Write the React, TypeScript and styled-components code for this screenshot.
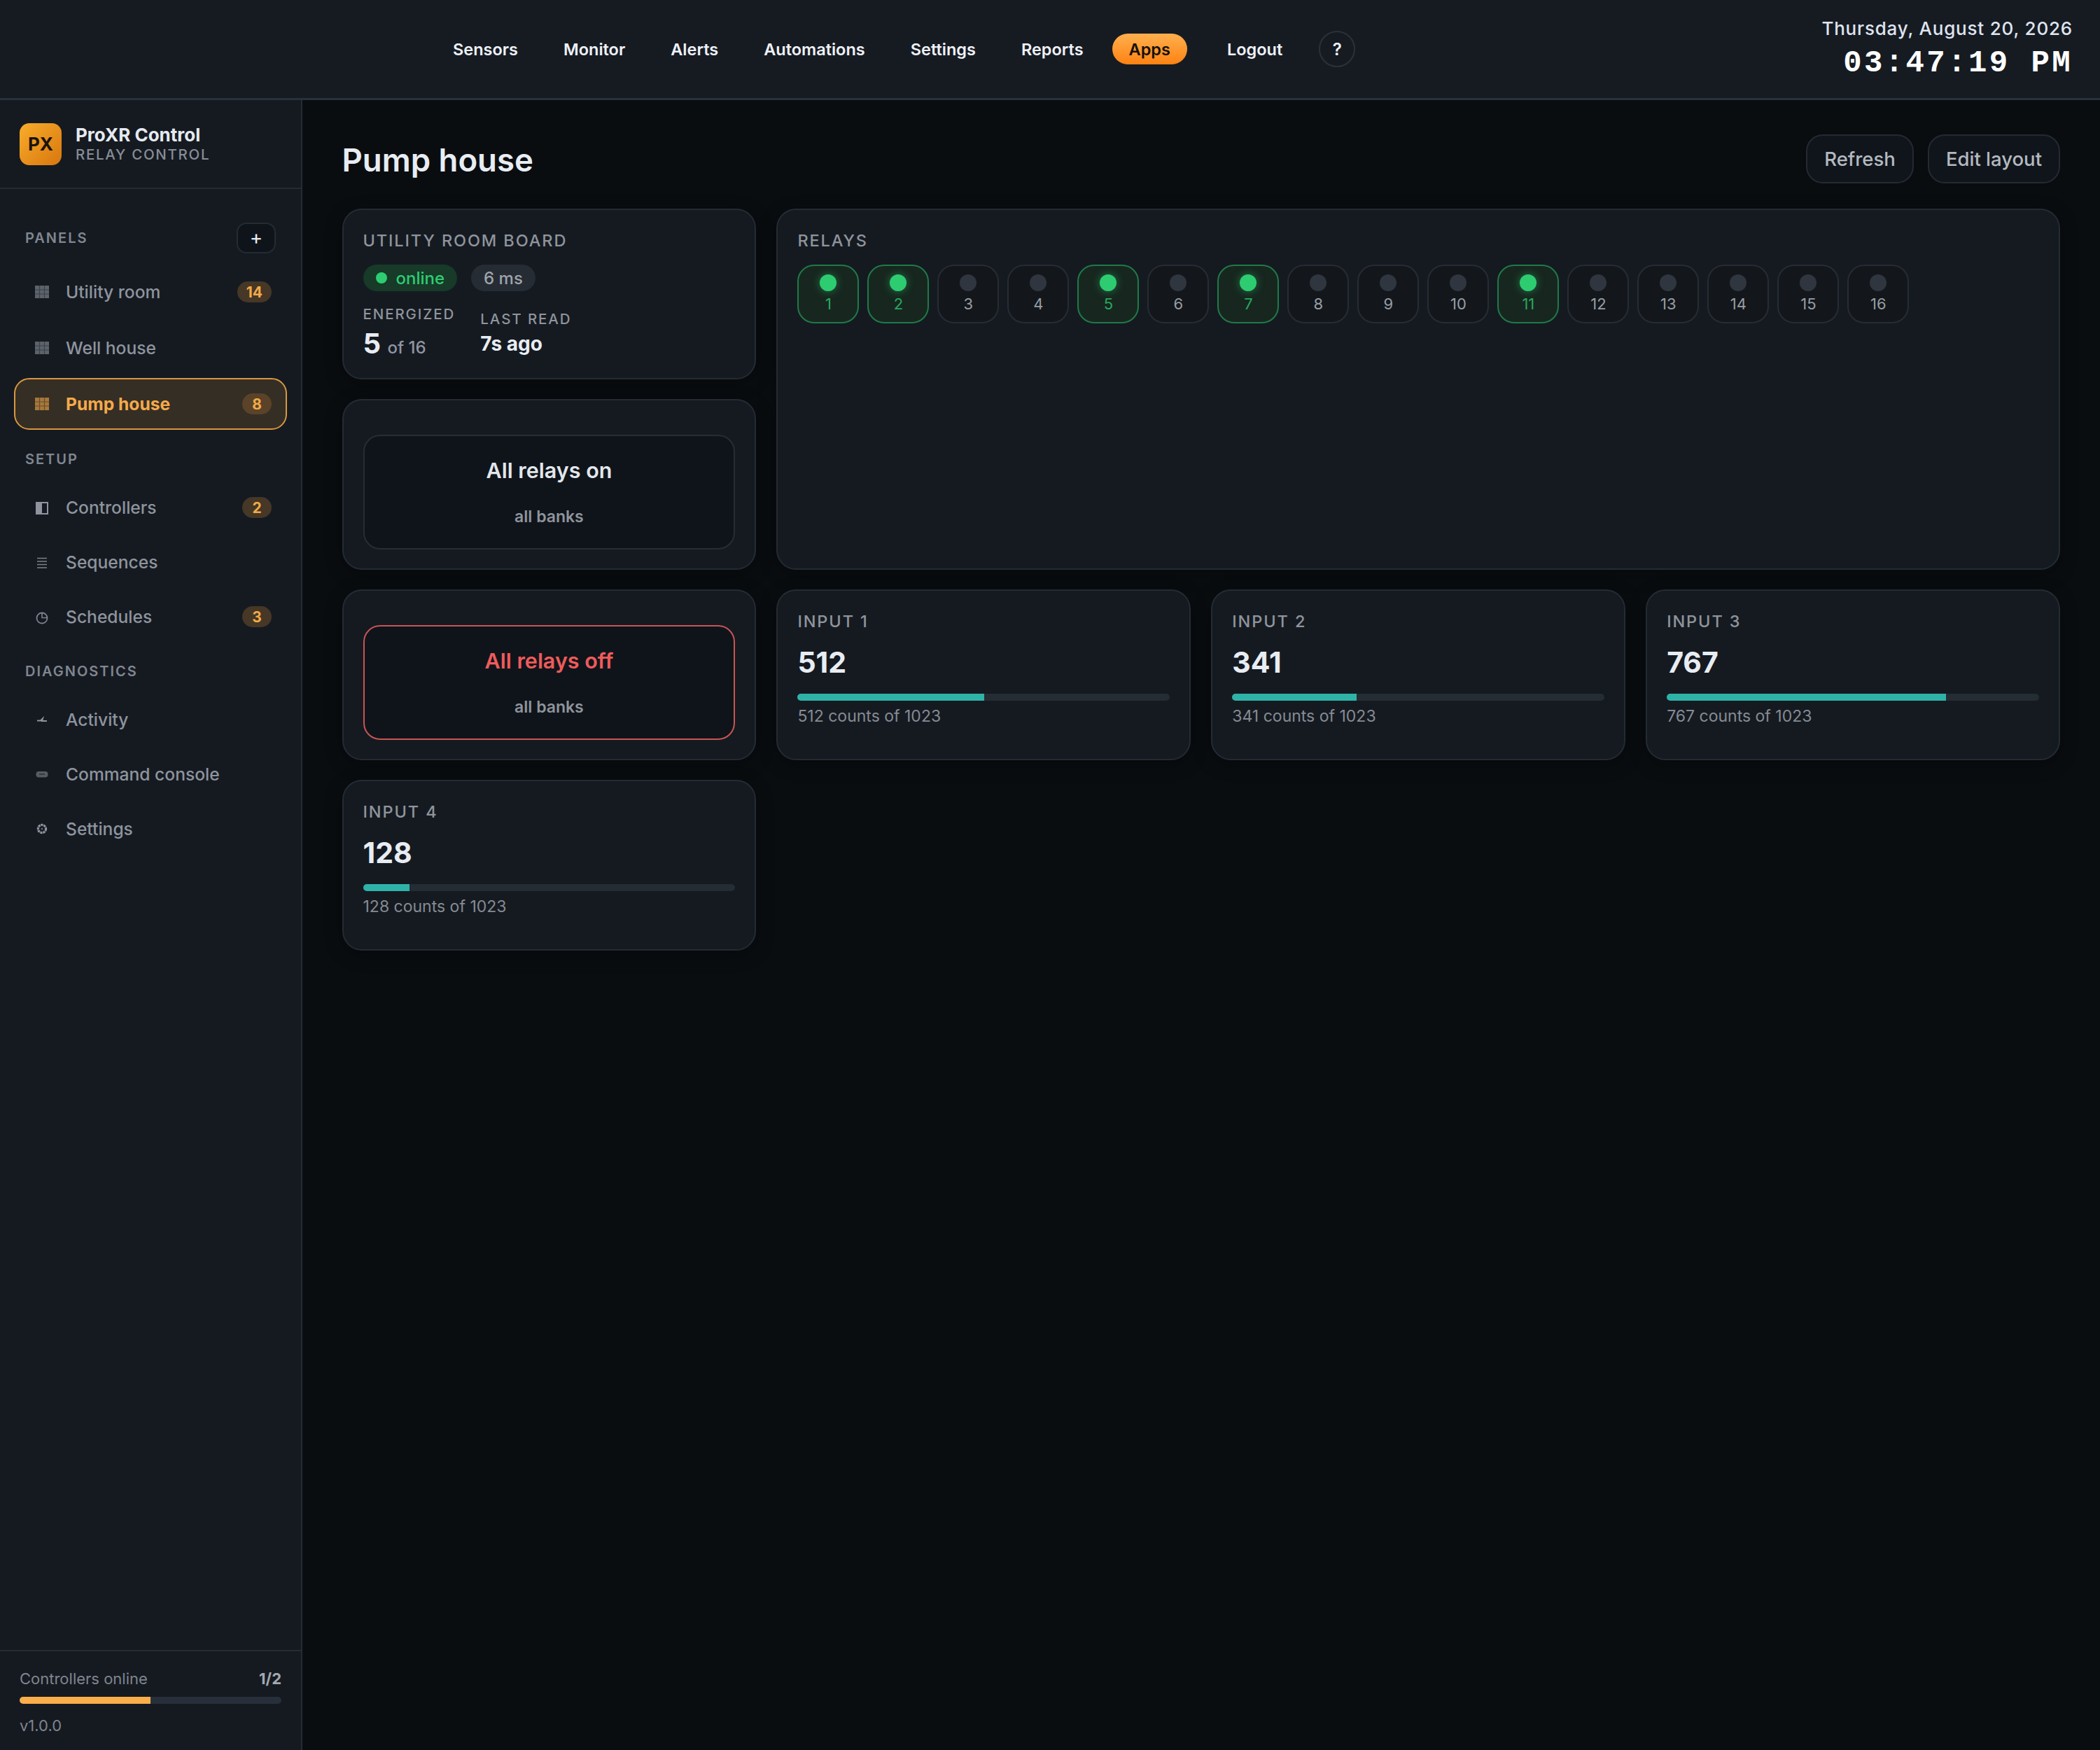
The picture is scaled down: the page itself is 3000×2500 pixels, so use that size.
import * as React from 'react';
import styled, { createGlobalStyle } from 'styled-components';

const GlobalStyle = createGlobalStyle`
  html, body {
    margin: 0;
    padding: 0;
    background: #0a0d10;
    font-family: Inter, "Liberation Sans", sans-serif;
  }
  * {
    box-sizing: border-box;
  }
`;

const NAV = ['Sensors', 'Monitor', 'Alerts', 'Automations', 'Settings', 'Reports', 'Apps', 'Logout'];
const RELAYS_ON = [1, 2, 5, 7, 11];
const RELAYS = Array.from({ length: 16 }, (_, i) => i + 1);

const GridIcon = () => (
  <IconSvg viewBox="0 0 24 24">
    <rect x="2" y="3" width="20" height="18" fill="currentColor" opacity="0.6" />
    <path d="M2 9h20M2 15h20M8.5 3v18M15.5 3v18" stroke="#151a21" strokeOpacity="0.45" strokeWidth="1.2" />
  </IconSvg>
);

const HalfIcon = () => (
  <IconSvg viewBox="0 0 24 24">
    <rect x="4" y="5" width="8" height="16" fill="currentColor" />
    <rect x="4" y="5" width="16" height="16" fill="none" stroke="currentColor" strokeWidth="2" />
  </IconSvg>
);

const LinesIcon = () => (
  <IconSvg viewBox="0 0 24 24">
    <path d="M5 6.5h14M5 11h14M5 15.5h14M5 20h14" stroke="currentColor" strokeWidth="1.7" opacity="0.85" />
  </IconSvg>
);

const ClockIcon = () => (
  <IconSvg viewBox="0 0 24 24">
    <circle cx="12" cy="14" r="7.5" fill="none" stroke="currentColor" strokeWidth="1.8" opacity="0.85" />
    <path d="M12 7v6.5h7.5" fill="none" stroke="currentColor" strokeWidth="1.6" opacity="0.85" />
  </IconSvg>
);

const PulseIcon = () => (
  <IconSvg viewBox="0 0 24 24">
    <path d="M5 13.5h5l3-3-1 3.5h7" fill="none" stroke="currentColor" strokeWidth="2" />
  </IconSvg>
);

const KeysIcon = () => (
  <IconSvg viewBox="0 0 24 24">
    <rect x="3.5" y="8" width="17" height="8.5" rx="4" fill="currentColor" opacity="0.55" />
    <path d="M8 12h8" stroke="#151a21" strokeOpacity="0.5" strokeWidth="2" />
  </IconSvg>
);

const GearIcon = () => (
  <IconSvg viewBox="0 0 24 24">
    <circle cx="12" cy="12" r="5.6" fill="none" stroke="currentColor" strokeWidth="3.2" strokeDasharray="3.2 0.8" />
    <circle cx="12" cy="12" r="1.6" fill="currentColor" opacity="0.6" />
  </IconSvg>
);

const SECTIONS = [
  {
    title: 'SETUP',
    items: [
      { icon: <HalfIcon />, label: 'Controllers', badge: '2' },
      { icon: <LinesIcon />, label: 'Sequences' },
      { icon: <ClockIcon />, label: 'Schedules', badge: '3' },
    ],
  },
  {
    title: 'DIAGNOSTICS',
    items: [
      { icon: <PulseIcon />, label: 'Activity' },
      { icon: <KeysIcon />, label: 'Command console' },
      { icon: <GearIcon />, label: 'Settings' },
    ],
  },
];

const PANELS = [
  { label: 'Utility room', badge: '14' },
  { label: 'Well house' },
  { label: 'Pump house', badge: '8', active: true },
];

const InputCard = ({ index, value }: { index: number; value: number }) => (
  <Card>
    <CardLabel>INPUT {index}</CardLabel>
    <InputValue>{value}</InputValue>
    <Track>
      <Fill style={{ width: `${(value / 1023) * 100}%` }} />
    </Track>
    <InputNote>{value} counts of 1023</InputNote>
  </Card>
);

const App = () => (
  <Page>
    <GlobalStyle />
    <TopBar>
      <Nav>
        {NAV.map(item => (
          <NavItem key={item} $active={item === 'Apps'} $pushed={item === 'Logout'}>
            {item}
          </NavItem>
        ))}
        <HelpButton>?</HelpButton>
      </Nav>
      <Clock>
        <ClockDate>Thursday, August 20, 2026</ClockDate>
        <ClockTime>03:47:19 PM</ClockTime>
      </Clock>
    </TopBar>

    <Body>
      <Sidebar>
        <Brand>
          <Logo>PX</Logo>
          <BrandText>
            <BrandName>ProXR Control</BrandName>
            <BrandSub>RELAY CONTROL</BrandSub>
          </BrandText>
        </Brand>

        <SideNav>
          <PanelsHead>
            <SectionLabel>PANELS</SectionLabel>
            <AddButton>+</AddButton>
          </PanelsHead>
          <ItemList>
            {PANELS.map(item => (
              <SideItem key={item.label} $active={item.active} $tall>
                <GridIcon />
                <SideText>{item.label}</SideText>
                {item.badge && <Badge $active={item.active}>{item.badge}</Badge>}
              </SideItem>
            ))}
          </ItemList>

          {SECTIONS.map(section => (
            <Section key={section.title}>
              <SectionLabel>{section.title}</SectionLabel>
              <ItemList>
                {section.items.map(item => (
                  <SideItem key={item.label}>
                    {item.icon}
                    <SideText>{item.label}</SideText>
                    {item.badge && <Badge>{item.badge}</Badge>}
                  </SideItem>
                ))}
              </ItemList>
            </Section>
          ))}
        </SideNav>

        <SideFooter>
          <FooterRow>
            <span>Controllers online</span>
            <strong>1/2</strong>
          </FooterRow>
          <FooterTrack>
            <FooterFill style={{ width: '50%' }} />
          </FooterTrack>
          <Version>v1.0.0</Version>
        </SideFooter>
      </Sidebar>

      <Main>
        <PageHead>
          <PageTitle>Pump house</PageTitle>
          <HeadActions>
            <GhostButton>Refresh</GhostButton>
            <GhostButton>Edit layout</GhostButton>
          </HeadActions>
        </PageHead>

        <Grid>
          <Card>
            <CardLabel>UTILITY ROOM BOARD</CardLabel>
            <Pills>
              <OnlinePill>
                <OnlineDot />
                online
              </OnlinePill>
              <MutedPill>6 ms</MutedPill>
            </Pills>
            <Stats>
              <Stat>
                <StatLabel>ENERGIZED</StatLabel>
                <StatBig>
                  5 <small>of 16</small>
                </StatBig>
              </Stat>
              <Stat>
                <StatLabel>LAST READ</StatLabel>
                <StatValue>7s ago</StatValue>
              </Stat>
            </Stats>
          </Card>

          <RelayCard>
            <CardLabel>RELAYS</CardLabel>
            <RelayRow>
              {RELAYS.map(n => {
                const on = RELAYS_ON.includes(n);
                return (
                  <RelayTile key={n} $on={on}>
                    <RelayDot $on={on} />
                    <RelayNumber $on={on}>{n}</RelayNumber>
                  </RelayTile>
                );
              })}
            </RelayRow>
          </RelayCard>

          <ActionCard>
            <ActionButton>
              <ActionTitle>All relays on</ActionTitle>
              <ActionSub>all banks</ActionSub>
            </ActionButton>
          </ActionCard>

          <ActionCard>
            <ActionButton $danger>
              <ActionTitle $danger>All relays off</ActionTitle>
              <ActionSub>all banks</ActionSub>
            </ActionButton>
          </ActionCard>

          <InputCard index={1} value={512} />
          <InputCard index={2} value={341} />
          <InputCard index={3} value={767} />
          <InputCard index={4} value={128} />
        </Grid>
      </Main>
    </Body>
  </Page>
);

const Page = styled.div`
  display: flex;
  flex-direction: column;
  height: 2500px;
  background: #0a0d10;
  color: #e6eaf0;
`;

const TopBar = styled.header`
  flex: none;
  display: flex;
  align-items: center;
  justify-content: space-between;
  height: 143px;
  padding: 0 39px 0 623px;
  background: #161b22;
  border-bottom: 3px solid #29323b;
`;

const Nav = styled.nav`
  display: flex;
  align-items: center;
  gap: 17px;
`;

const NavItem = styled.a<{ $active?: boolean; $pushed?: boolean }>`
  display: flex;
  align-items: center;
  height: 44px;
  padding: 0 24px;
  margin-left: ${p => (p.$pushed ? '16px' : '0')};
  border-radius: 22px;
  font-size: 23.5px;
  font-weight: 600;
  color: ${p => (p.$active ? '#14100a' : '#eef1f7')};
  background: ${p => (p.$active ? 'linear-gradient(180deg, #ffb04f, #ff8212)' : 'none')};
`;

const HelpButton = styled.button`
  width: 52px;
  height: 52px;
  margin-left: 11px;
  padding: 0;
  border: 2px solid #2b313a;
  border-radius: 50%;
  background: none;
  color: #eef1f7;
  font: 600 24px Inter, sans-serif;
`;

const Clock = styled.div`
  display: flex;
  flex-direction: column;
  align-items: flex-end;
  gap: 8px;
`;

const ClockDate = styled.div`
  font-size: 26px;
  font-weight: 500;
  letter-spacing: 0.8px;
  line-height: 32px;
  color: #dfe4ef;
`;

const ClockTime = styled.div`
  font-family: "Liberation Mono", monospace;
  font-size: 44px;
  font-weight: 700;
  letter-spacing: 3.4px;
  line-height: 50px;
  color: #ffffff;
`;

const Body = styled.div`
  flex: 1;
  display: flex;
  min-height: 0;
`;

const Sidebar = styled.aside`
  flex: none;
  display: flex;
  flex-direction: column;
  width: 432px;
  background: #151a21;
  border-right: 2px solid #232b33;
`;

const Brand = styled.div`
  display: flex;
  align-items: center;
  gap: 20px;
  height: 127px;
  padding: 0 28px;
  border-bottom: 2px solid #232b33;
`;

const Logo = styled.div`
  display: flex;
  align-items: center;
  justify-content: center;
  width: 60px;
  height: 60px;
  border-radius: 14px;
  background: linear-gradient(135deg, #f9ad2a, #d8760f);
  color: #1a1208;
  font-size: 26px;
  font-weight: 700;
`;

const BrandText = styled.div`
  display: flex;
  flex-direction: column;
`;

const BrandName = styled.div`
  font-size: 26px;
  font-weight: 700;
  line-height: 30px;
  color: #e6eaf0;
`;

const BrandSub = styled.div`
  font-size: 20.5px;
  font-weight: 500;
  letter-spacing: 1.7px;
  line-height: 26px;
  color: #878d96;
`;

const SideNav = styled.nav`
  flex: 1;
  padding: 48px 20px 0;
`;

const PanelsHead = styled.div`
  display: flex;
  align-items: center;
  justify-content: space-between;
  height: 44px;
  margin-bottom: 18px;
  padding: 0 16px;
`;

const SectionLabel = styled.div`
  font-size: 20px;
  font-weight: 600;
  letter-spacing: 2px;
  line-height: 26px;
  color: #808690;
`;

const AddButton = styled.button`
  width: 56px;
  height: 44px;
  padding: 0 0 3px;
  border: 2px solid #232b33;
  border-radius: 14px;
  background: #0f141a;
  color: #e6eaf0;
  font: 400 28px Inter, sans-serif;
  line-height: 1;
`;

const Section = styled.section`
  display: flex;
  flex-direction: column;
  gap: 20px;
  margin-top: 29px;

  ${SectionLabel} {
    padding: 0 16px;
  }
`;

const ItemList = styled.div`
  display: flex;
  flex-direction: column;
  gap: 6px;
`;

const SideItem = styled.a<{ $active?: boolean; $tall?: boolean }>`
  display: flex;
  align-items: center;
  gap: 22px;
  height: ${p => (p.$tall ? '74px' : '72px')};
  padding: 0 20px 0 26px;
  border: 2px solid ${p => (p.$active ? '#d9983f' : 'transparent')};
  border-radius: 22px;
  background: ${p => (p.$active ? '#352e25' : 'none')};
  color: ${p => (p.$active ? '#f5aa4a' : '#8e949d')};
  font-weight: ${p => (p.$active ? 700 : 500)};
`;

const IconSvg = styled.svg`
  flex: none;
  width: 24px;
  height: 24px;
`;

const SideText = styled.span`
  flex: 1;
  font-size: 24.6px;
`;

const Badge = styled.span<{ $active?: boolean }>`
  display: flex;
  align-items: center;
  justify-content: center;
  min-width: 42px;
  height: 30px;
  padding: 0 13px;
  border-radius: 15px;
  background: ${p => (p.$active ? '#5a4329' : '#463726')};
  color: #f3aa48;
  font-size: 21px;
  font-weight: 700;
`;

const SideFooter = styled.footer`
  flex: none;
  height: 143px;
  padding: 26px 28px 0;
  border-top: 2px solid #232b33;
`;

const FooterRow = styled.div`
  display: flex;
  justify-content: space-between;
  font-size: 22px;
  line-height: 26px;
  color: #7f858e;

  strong {
    font-weight: 700;
    color: #a3a8b0;
  }
`;

const FooterTrack = styled.div`
  height: 10px;
  margin-top: 13px;
  border-radius: 5px;
  background: #27303a;
  overflow: hidden;
`;

const FooterFill = styled.div`
  height: 100%;
  background: #f9ae4b;
`;

const Version = styled.div`
  margin-top: 18px;
  font-size: 22px;
  line-height: 26px;
  color: #7f858e;
`;

const Main = styled.main`
  flex: 1;
  min-width: 0;
  padding: 49px 57px 0 56.5px;
`;

const PageHead = styled.div`
  display: flex;
  align-items: center;
  justify-content: space-between;
  height: 70px;
  margin-bottom: 36px;
`;

const PageTitle = styled.h1`
  margin: 2px 0 0;
  font-size: 45.5px;
  font-weight: 600;
  color: #e8edf3;
`;

const HeadActions = styled.div`
  display: flex;
  gap: 20px;
`;

const GhostButton = styled.button`
  height: 70px;
  padding: 0 24px;
  border: 2px solid #232a32;
  border-radius: 24px;
  background: #10151b;
  color: #b4b9c0;
  font: 500 27.5px Inter, sans-serif;
`;

const Grid = styled.div`
  display: grid;
  grid-template-columns: repeat(4, 1fr);
  grid-auto-rows: 244px;
  gap: 28px 29px;
`;

const Card = styled.section`
  padding: 30px 28px 0;
  border: 2px solid #232b33;
  border-radius: 28px;
  background: #151a21;
  box-shadow: 0 6px 24px rgba(0, 0, 0, 0.35);
`;

const RelayCard = styled(Card)`
  grid-column: 2 / 5;
  grid-row: 1 / 3;
`;

const CardLabel = styled.div`
  font-size: 23.5px;
  font-weight: 500;
  letter-spacing: 1.9px;
  line-height: 28px;
  color: #8f949c;
`;

const Pills = styled.div`
  display: flex;
  gap: 20px;
  margin-top: 20px;
`;

const OnlinePill = styled.span`
  display: flex;
  align-items: center;
  gap: 13px;
  height: 38px;
  padding: 0 18px;
  border-radius: 19px;
  background: #173a29;
  color: #2ecc71;
  font-size: 24px;
  font-weight: 500;
`;

const OnlineDot = styled.span`
  width: 16px;
  height: 16px;
  border-radius: 50%;
  background: #2ecc71;
`;

const MutedPill = styled.span`
  display: flex;
  align-items: center;
  height: 38px;
  padding: 0 18px;
  border-radius: 19px;
  background: #262c34;
  color: #9fa4ac;
  font-size: 24px;
  font-weight: 500;
`;

const Stats = styled.div`
  display: flex;
  align-items: flex-start;
  gap: 36px;
  margin-top: 20px;
`;

const Stat = styled.div`
  display: flex;
  flex-direction: column;

  & + & {
    margin-top: 7px;
  }
`;

const StatLabel = styled.div`
  font-size: 20.5px;
  font-weight: 500;
  letter-spacing: 1.9px;
  line-height: 26px;
  color: #8f949c;
`;

const StatBig = styled.div`
  font-size: 40px;
  font-weight: 700;
  line-height: 58px;
  color: #e8edf3;

  small {
    font-size: 24px;
    font-weight: 500;
    color: #9095a0;
  }
`;

const StatValue = styled.div`
  font-size: 28px;
  font-weight: 700;
  line-height: 44px;
  color: #e8edf3;
`;

const RelayRow = styled.div`
  display: flex;
  gap: 12px;
  margin-top: 20px;
`;

const RelayTile = styled.div<{ $on: boolean }>`
  display: flex;
  flex-direction: column;
  align-items: center;
  width: 88px;
  height: 84px;
  padding-top: 12px;
  border: 2px solid ${p => (p.$on ? '#1f7a48' : '#262c34')};
  border-radius: 24px;
  background: ${p => (p.$on ? '#17271f' : '#13171b')};
`;

const RelayDot = styled.span<{ $on: boolean }>`
  width: 24px;
  height: 24px;
  border-radius: 50%;
  background: ${p => (p.$on ? '#2ecc71' : '#2f3640')};
  box-shadow: ${p => (p.$on ? '0 0 12px rgba(46, 204, 113, 0.5)' : 'none')};
`;

const RelayNumber = styled.span<{ $on: boolean }>`
  margin-top: 4px;
  font-size: 22px;
  line-height: 28px;
  color: ${p => (p.$on ? '#27a85f' : '#989da5')};
`;

const ActionCard = styled(Card)`
  padding: 49px 28px 0;
`;

const ActionButton = styled.div<{ $danger?: boolean }>`
  display: flex;
  flex-direction: column;
  align-items: center;
  height: 164px;
  padding-top: 29px;
  border: 2px solid ${p => (p.$danger ? '#c95454' : '#262d35')};
  border-radius: 24px;
  background: #0f141a;
`;

const ActionTitle = styled.div<{ $danger?: boolean }>`
  font-size: 30.5px;
  font-weight: 600;
  line-height: 40px;
  color: ${p => (p.$danger ? '#ef5b5b' : '#e2e6ec')};
`;

const ActionSub = styled.div`
  margin-top: 32px;
  font-size: 23px;
  font-weight: 600;
  line-height: 28px;
  color: #8f949c;
`;

const InputValue = styled.div`
  margin-top: 19px;
  font-size: 41px;
  font-weight: 700;
  line-height: 50px;
  color: #e8edf3;
`;

const Track = styled.div`
  height: 10px;
  margin-top: 20px;
  border-radius: 5px;
  background: #242c34;
  overflow: hidden;
`;

const Fill = styled.div`
  height: 100%;
  background: #2fb3a8;
`;

const InputNote = styled.div`
  margin-top: 8px;
  font-size: 23px;
  line-height: 28px;
  color: #858b93;
`;

export default App;
